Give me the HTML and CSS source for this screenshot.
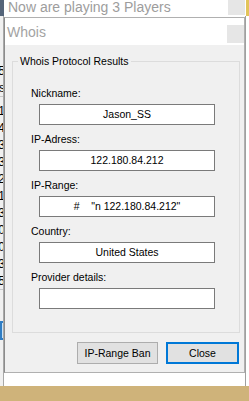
FILE: index.html
```html
<!DOCTYPE html>
<html>
<head>
  <meta charset="utf-8">
  <link rel="stylesheet" href="styles.css">
</head>
<body>
  <div class="app">
    <div class="app-corner"></div>
    <div class="app-title">
      <span>Now are playing 3 Players</span>
      <div class="cap-btn"></div>
    </div>
    <div class="app-list">
      <div class="list-row">5</div>
      <div class="list-row head">s</div>
      <div class="list-row">1</div>
      <div class="list-row">4</div>
      <div class="list-row">3</div>
      <div class="list-row">3</div>
      <div class="list-row">2</div>
      <div class="list-row">1</div>
      <div class="list-row">3</div>
      <div class="list-row">0</div>
      <div class="list-row">0</div>
      <div class="list-row">3</div>
      <div class="list-row last">5</div>
      <div class="list-tab"></div>
    </div>
    <div class="app-content"></div>
  </div>

  <div class="dialog">
    <div class="dlg-title">
      <span>Whois</span>
      <div class="cap-btn"></div>
    </div>
    <div class="dlg-body">
      <fieldset class="group">
        <legend>Whois Protocol Results</legend>
        <div class="field">
          <div class="field-label">Nickname:</div>
          <div class="field-box">Jason_SS</div>
        </div>
        <div class="field">
          <div class="field-label">IP-Adress:</div>
          <div class="field-box">122.180.84.212</div>
        </div>
        <div class="field">
          <div class="field-label">IP-Range:</div>
          <div class="field-box pre">#    "n 122.180.84.212"</div>
        </div>
        <div class="field">
          <div class="field-label">Country:</div>
          <div class="field-box">United States</div>
        </div>
        <div class="field">
          <div class="field-label">Provider details:</div>
          <div class="field-box"></div>
        </div>
      </fieldset>
      <div class="actions">
        <button class="btn ban">IP-Range Ban</button>
        <button class="btn close">Close</button>
      </div>
    </div>
  </div>
</body>
</html>
```

FILE: styles.css
```css
* {
  margin: 0;
  padding: 0;
  box-sizing: border-box;
}

body {
  width: 249px;
  height: 401px;
  position: relative;
  overflow: hidden;
  background: #cfb37a;
  font-family: 'Liberation Sans', Arial, sans-serif;
  font-size: 10.5px;
  color: #000;
}

/* background app window */
.app {
  position: absolute;
  left: 0;
  top: 0;
  width: 249px;
  height: 386px;
  display: grid;
  grid-template-columns: 4px 1fr;
  grid-template-rows: 16px 1fr;
  background: #fff;
}

.app-corner {
  background: #55657a;
}

.app-title {
  display: flex;
  align-items: flex-start;
  justify-content: space-between;
  padding-left: 4px;
  padding-right: 1px;
  background: #fff;
  border-right: 3px solid #e2c45a;
  font-size: 14px;
  line-height: 15px;
  color: #9d9d9d;
}

.app-title .cap-btn {
  width: 17px;
  height: 15px;
}

.app-list {
  display: flex;
  flex-direction: column;
  padding-top: 47px;
  background: #f0f0f0;
  border-right: 1px solid #a8a8a8;
  overflow: hidden;
  font-size: 12px;
}

.list-row {
  height: 17px;
  line-height: 17px;
  display: flex;
  justify-content: flex-end;
  margin-right: -2px;
}

.list-row.head {
  margin-bottom: 6px;
  border-bottom: 1px solid #c8c8c8;
}

.list-row.last {
  border-bottom: 1px solid #c8c8c8;
}

.list-tab {
  margin-top: 31px;
  height: 19px;
  background: #cce4f7;
  border: 2px solid #2f7dc4;
  border-right: none;
}

.app-content {
  background: #fff;
  border-right: 1px solid #a0a0a0;
  margin-right: 3px;
}

.cap-btn {
  background: #e6e6e6;
}

/* whois dialog */
.dialog {
  position: absolute;
  left: 4px;
  top: 17px;
  width: 241px;
  border: 1px solid #b0b0b0;
  border-left-color: #8c8c8c;
  background: #f0f0f0;
}

.dlg-title {
  height: 27px;
  display: flex;
  align-items: center;
  justify-content: space-between;
  padding-left: 2px;
  background: #fff;
  font-size: 14px;
  color: #a3a3a3;
}

.dlg-title .cap-btn {
  width: 17px;
  height: 18px;
  margin-top: 4px;
}

.dlg-body {
  padding: 9px 5px 8px 7px;
}

.group {
  width: 228px;
  border: 1px solid #dcdcdc;
  padding: 18px 10px 23px 18px;
  min-inline-size: 0;
}

.group legend {
  margin-left: -13px;
  padding: 0 2px;
  line-height: 14px;
}

.field {
  margin-bottom: 7px;
}

.field:last-child {
  margin-bottom: 0;
}

.field-label {
  line-height: 14px;
  margin-bottom: 4px;
}

.field-box {
  margin-left: 8px;
  width: 176px;
  height: 21px;
  line-height: 19px;
  border: 1px solid #7a7a7a;
  background: #fff;
  text-align: center;
}

.field-box.pre {
  white-space: pre;
}

.actions {
  display: flex;
  justify-content: flex-end;
  gap: 8px;
  margin-top: 9px;
}

.btn {
  height: 22px;
  font-family: inherit;
  font-size: 10.5px;
  color: #000;
  background: #e1e1e1;
  border: 1px solid #adadad;
}

.btn.ban {
  width: 81px;
}

.btn.close {
  width: 73px;
  border: 2px solid #0078d7;
}
```
